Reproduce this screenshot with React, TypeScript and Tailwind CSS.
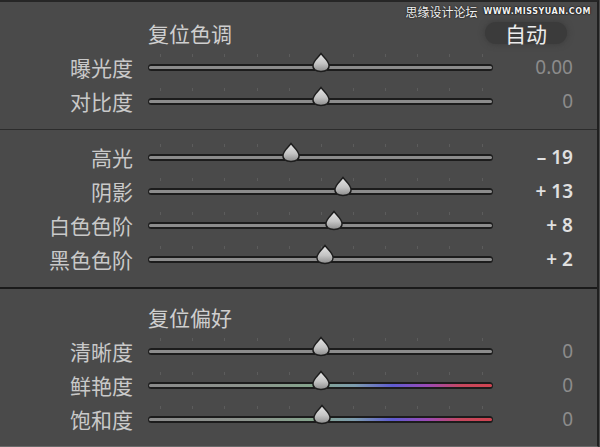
import React from 'react';

type SliderRow = {
  label: string;
  pos: number; // thumb centre, px from track start
  value: string;
  strong?: boolean;
  colour?: boolean;
};

const TICKS = [12, 44, 76, 109, 141, 173, 205, 237, 269, 301, 334];

function Thumb({ pos }: { pos: number }) {
  return (
    <svg
      className="absolute top-[-12px]"
      style={{ left: pos - 11 }}
      width="22"
      height="21"
      viewBox="0 0 22 21"
    >
      <defs>
        <linearGradient id="thumbFill" x1="0" y1="0" x2="0" y2="1">
          <stop offset="0%" stopColor="#e6e6e6" />
          <stop offset="55%" stopColor="#c4c4c4" />
          <stop offset="100%" stopColor="#8c8c8c" />
        </linearGradient>
      </defs>
      <path
        d="M11 1.5 C13 4.5 18.5 8.5 19 13 C19.5 17.5 16 19.5 11 19.5 C6 19.5 2.5 17.5 3 13 C3.5 8.5 9 4.5 11 1.5 Z"
        fill="url(#thumbFill)"
        stroke="#1c1c1c"
        strokeWidth="1.4"
      />
    </svg>
  );
}

function Track({ pos, colour }: { pos: number; colour?: boolean }) {
  return (
    <div className="relative w-[345px]">
      {TICKS.map(t => (
        <span
          key={t}
          className="absolute top-[-10px] h-[3px] w-px bg-[#5c5c5c]"
          style={{ left: t }}
        />
      ))}
      <div className="rounded-full bg-[#1c1c1c] px-[1px] pt-[2px] pb-[2px]">
        <div
          className={
            colour
              ? 'h-[3px] rounded-full bg-[linear-gradient(to_right,#8a8a8a_0%,#8c928c_28%,#84a48c_48%,#7c9cae_60%,#5e5cd0_71%,#9a4ab6_81%,#c6485e_91%,#d04450_100%)]'
              : 'h-[3px] rounded-full bg-[#8c8c8c]'
          }
        />
      </div>
      <Thumb pos={pos} />
    </div>
  );
}

function Row({ row }: { row: SliderRow }) {
  return (
    <div className="flex h-[34px] items-center">
      <div className="w-[133px] text-right text-[21px] leading-none text-[#c9c9c9]">{row.label}</div>
      <div className="ml-[15px]">
        <Track pos={row.pos} colour={row.colour} />
      </div>
      <div
        className={
          row.strong
            ? "w-[80px] text-right font-['Noto_Sans',sans-serif] text-[19px] font-semibold leading-none text-[#e0e0e0]"
            : "w-[80px] text-right font-['Noto_Sans',sans-serif] text-[19px] leading-none text-[#8c8c8c]"
        }
      >
        {row.value}
      </div>
    </div>
  );
}

function Header({ title, auto }: { title: string; auto?: boolean }) {
  return (
    <div className="flex h-[34px] items-center">
      <div className="w-[148px]" />
      <div className="flex-1 text-[21px] leading-none text-[#cfcfcf]">{title}</div>
      {auto && (
        <div className="mr-[30px] flex h-[22px] w-[82px] items-center justify-center rounded-full bg-[#3b3b3b] text-[21px] leading-none text-[#ececec] shadow-[0_0_6px_#3b3b3b]">
          自动
        </div>
      )}
    </div>
  );
}

const tone: SliderRow[] = [
  { label: '曝光度', pos: 173, value: '0.00' },
  { label: '对比度', pos: 173, value: '0' },
];

const light: SliderRow[] = [
  { label: '高光', pos: 143, value: '– 19', strong: true },
  { label: '阴影', pos: 195, value: '+ 13', strong: true },
  { label: '白色色阶', pos: 186, value: '+ 8', strong: true },
  { label: '黑色色阶', pos: 177, value: '+ 2', strong: true },
];

const presence: SliderRow[] = [
  { label: '清晰度', pos: 173, value: '0' },
  { label: '鲜艳度', pos: 173, value: '0', colour: true },
  { label: '饱和度', pos: 174, value: '0', colour: true },
];

export default function App() {
  return (
    <div className="relative h-[447px] w-[600px] overflow-hidden bg-[#4a4a4a] font-['Noto_Sans_CJK_SC',sans-serif]">
      <div className="flex h-full w-[599px] flex-col border-t-2 border-r-2 border-b border-t-[#262626] border-r-[#202020] border-b-[#6a6a6a]">
        <section className="pt-[14px] pb-[11px]">
          <Header title="复位色调" auto />
          {tone.map(r => (
            <Row key={r.label} row={r} />
          ))}
        </section>
        <div className="h-px bg-[#2c2c2c]" />
        <section className="pt-[10px] pb-[11px]">
          {light.map(r => (
            <Row key={r.label} row={r} />
          ))}
        </section>
        <div className="h-[2px] bg-[#1a1a1a]" />
        <section className="pt-[11px]">
          <Header title="复位偏好" />
          {presence.map(r => (
            <Row key={r.label} row={r} />
          ))}
        </section>
      </div>

      {/* watermark */}
      <div className="absolute top-[6px] right-[9px] flex items-center gap-[6px] leading-none">
        <span className="text-[12px] text-[#f0f0f0] [text-shadow:0_0_2px_#000]">思缘设计论坛</span>
        <span className="font-['DejaVu_Sans',sans-serif] text-[8px] font-bold tracking-[0.5px] text-[#f4f4f4] [text-shadow:0_0_2px_#000,0_0_1px_#000]">
          WWW.MISSYUAN.COM
        </span>
      </div>
    </div>
  );
}
